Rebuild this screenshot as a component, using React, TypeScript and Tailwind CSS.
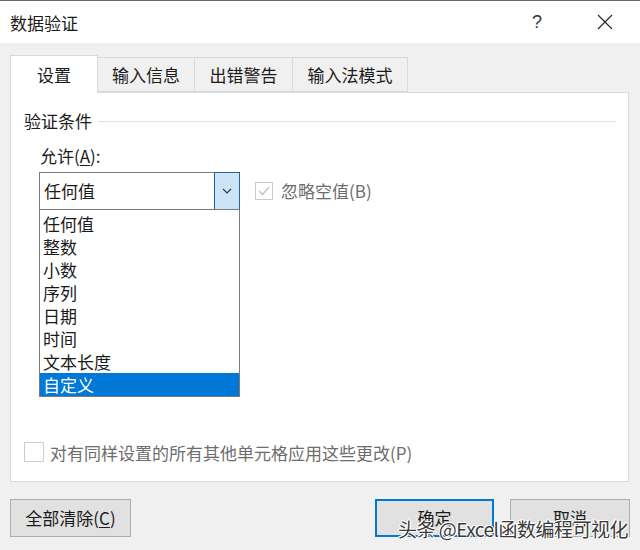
import React from 'react';

const font = { fontFamily: '"Noto Sans CJK SC", "Noto Sans", sans-serif' };

const tabs = ['输入信息', '出错警告', '输入法模式'];
const tabWidths = ['w-[97px]', 'w-[98px]', 'w-[115px]'];
const options = ['任何值', '整数', '小数', '序列', '日期', '时间', '文本长度', '自定义'];

const Chevron = () => (
  <svg width="10" height="6" viewBox="0 0 10 6" fill="none">
    <path d="M1 1 L5 5 L9 1" stroke="#333" strokeWidth="1.1" />
  </svg>
);

const Close = () => (
  <svg width="16" height="16" viewBox="0 0 16 16" fill="none">
    <path d="M1 1 L15 15 M15 1 L1 15" stroke="#222" strokeWidth="1.1" />
  </svg>
);

const App: React.FunctionComponent = () => {
  return (
    <div style={font} className="relative w-[640px] h-[550px] bg-[#f0f0f0] text-[#1a1a1a] overflow-hidden flex flex-col">
      {/* title bar */}
      <div className="h-[43px] bg-white border-t border-[#6b6b6b] flex items-center pl-[10px] pr-[27px]">
        <span className="text-[17px] leading-none">数据验证</span>
        <span className="ml-auto mr-[55px] text-[18px] leading-none text-[#333]" style={{ fontFamily: '"Liberation Sans", sans-serif' }}>?</span>
        <Close />
      </div>

      {/* tabs */}
      <div className="flex items-end ml-[10px] mt-[12px] h-[37px]">
        <div className="w-[88px] h-[38px] -mb-px relative z-10 bg-white border border-b-0 border-[#dadada] flex items-center justify-center text-[17px]">
          设置
        </div>
        {tabs.map((t, i) => (
          <div
            key={t}
            className={`${tabWidths[i]} h-[35px] border border-l-0 border-[#dadada] bg-[#f0f0f0] flex items-center justify-center text-[17px]`}>
            {t}
          </div>
        ))}
      </div>

      {/* panel */}
      <div className="relative ml-[10px] w-[619px] h-[390px] bg-white border border-[#dadada] flex flex-col">
        <div className="flex items-center pl-[13px] pr-[12px] mt-[16px]">
          <span className="text-[17px] leading-[24px]">验证条件</span>
          <div className="flex-1 h-px bg-[#e0e0e0] ml-[6px]" />
        </div>
        <div className="pl-[29px] mt-[11px] text-[17px] leading-[24px]">
          允许(<span className="underline underline-offset-2">A</span>):
        </div>
        <div className="flex items-center pl-[28px] mt-[4px]">
          <div className="relative w-[201px] h-[38px] border border-[#7a7a7a] bg-white flex">
            <div className="flex-1 flex items-center pl-[4px] text-[17px]">任何值</div>
            <div className="w-[26px] -my-px -mr-px bg-[#cce4f7] border border-[#2c628b] flex items-center justify-center">
              <Chevron />
            </div>
            {/* dropdown list */}
            <div className="absolute left-[-1px] top-[36px] w-[201px] bg-white border border-[#7a7a7a] z-20 flex flex-col pt-[2px]">
              {options.map((o, i) => (
                <div
                  key={o}
                  className={`h-[23px] pl-[3px] flex items-center text-[17px] leading-none ${i === options.length - 1 ? 'bg-[#0078d7] text-white' : ''}`}>
                  {o}
                </div>
              ))}
            </div>
          </div>
          <div className="ml-[15px] w-[18px] h-[18px] border border-[#cccccc] bg-white flex items-center justify-center">
            <svg width="12" height="10" viewBox="0 0 12 10" fill="none">
              <path d="M1 5 L4.5 8.5 L11 1" stroke="#bfbfbf" strokeWidth="1.2" />
            </svg>
          </div>
          <span className="ml-[8px] text-[17px] text-[#6d6d6d]">忽略空值(B)</span>
        </div>

        <div className="mt-auto mb-[16px] flex items-center pl-[13px]">
          <div className="w-[20px] h-[20px] border border-[#cccccc] bg-white" />
          <span className="ml-[6px] text-[17px] text-[#6d6d6d]">对有同样设置的所有其他单元格应用这些更改(P)</span>
        </div>
      </div>

      {/* buttons */}
      <div className="flex items-center mt-[17px] px-[10px]">
        <div className="w-[121px] h-[38px] bg-[#e1e1e1] border border-[#adadad] flex items-center justify-center text-[17px]">
          全部清除(<span className="underline underline-offset-2">C</span>)
        </div>
        <div className="ml-auto w-[119px] h-[38px] bg-[#e1e1e1] border-2 border-[#0078d7] flex items-center justify-center text-[17px]">
          确定
        </div>
        <div className="ml-[16px] w-[120px] h-[38px] bg-[#e1e1e1] border border-[#adadad] flex items-center justify-center text-[17px]">
          取消
        </div>
      </div>

      {/* watermark */}
      <div
        className="absolute right-[12px] bottom-[12px] text-[19px] leading-none text-[#3a3a3a] z-30 tracking-[-0.5px]"
        style={{ textShadow: '1px 0 0 #fff, -1px 0 0 #fff, 0 1px 0 #fff, 0 -1px 0 #fff, 1px 1px 0 #fff, -1px -1px 0 #fff' }}>
        头条 @Excel函数编程可视化
      </div>
    </div>
  );
};

export default App;
